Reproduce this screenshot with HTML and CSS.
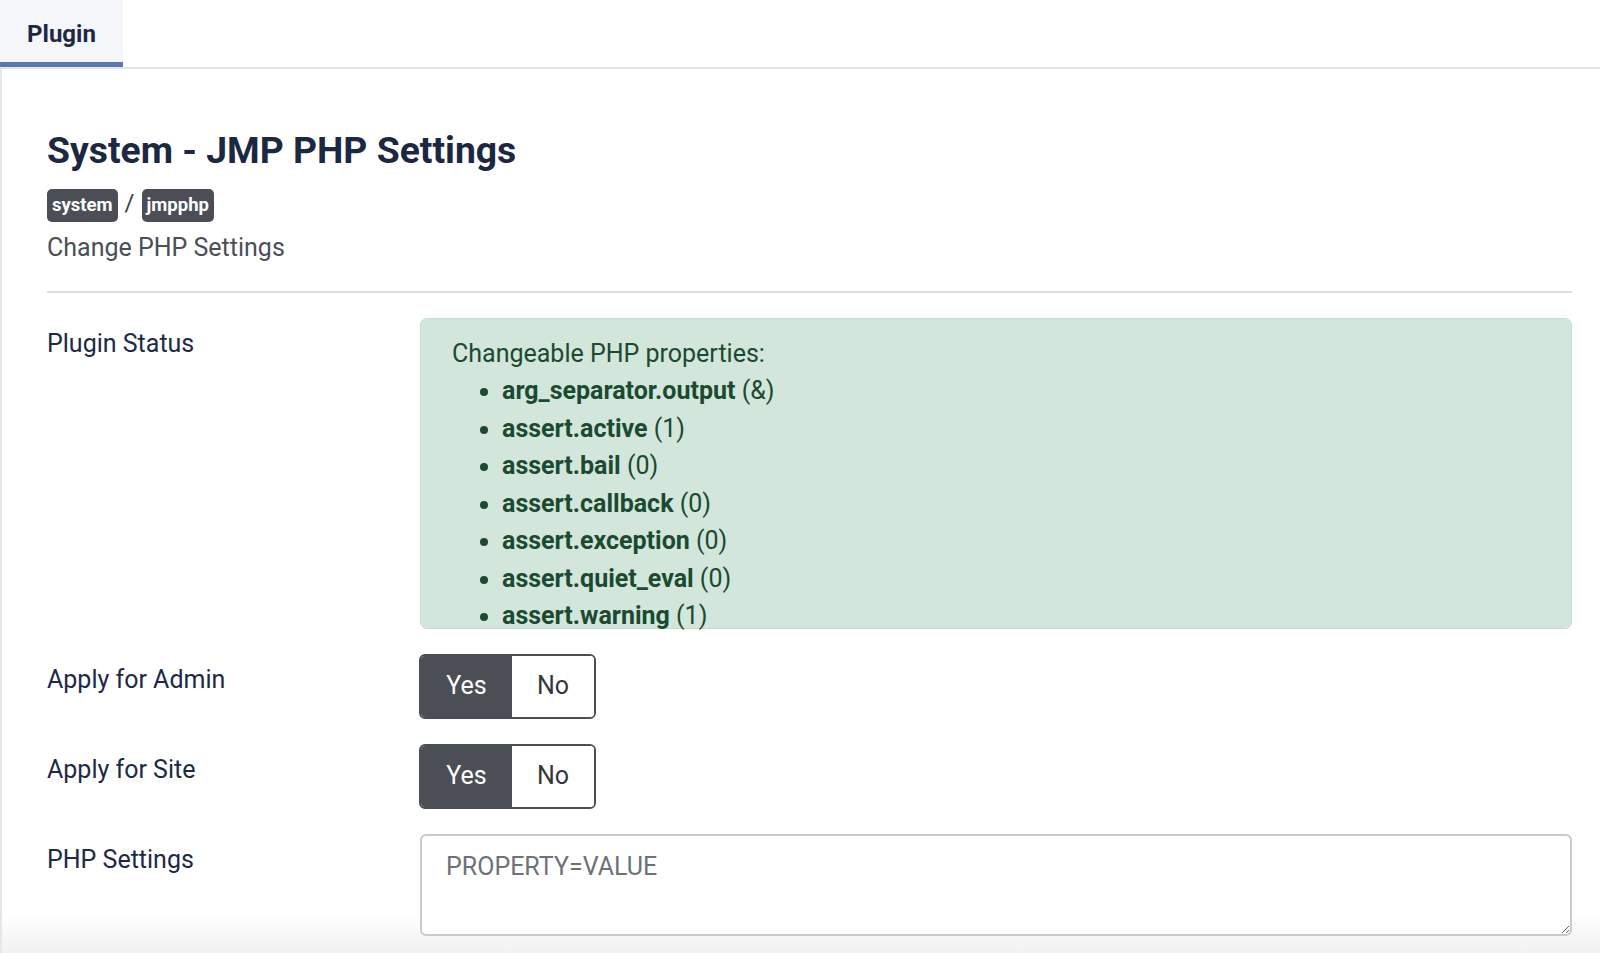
FILE: index.html
```html
<!DOCTYPE html>
<html lang="en">
<head>
<meta charset="utf-8">
<title>System - JMP PHP Settings</title>
<link rel="stylesheet" href="styles.css">
</head>
<body>
<div class="page">
  <nav class="tabs">
    <div class="tab active">Plugin</div>
  </nav>
  <main class="content">
    <h1 class="title">System - JMP PHP Settings</h1>
    <div class="badges">
      <span class="badge">system</span>
      <span class="sep">/</span>
      <span class="badge">jmpphp</span>
    </div>
    <p class="desc">Change PHP Settings</p>
    <hr class="divider">

    <div class="row">
      <div class="label">Plugin Status</div>
      <div class="control">
        <div class="alert">
          <div>Changeable PHP properties:</div>
          <ul class="props">
            <li><strong>arg_separator.output</strong> (&amp;)</li>
            <li><strong>assert.active</strong> (1)</li>
            <li><strong>assert.bail</strong> (0)</li>
            <li><strong>assert.callback</strong> (0)</li>
            <li><strong>assert.exception</strong> (0)</li>
            <li><strong>assert.quiet_eval</strong> (0)</li>
            <li><strong>assert.warning</strong> (1)</li>
          </ul>
        </div>
      </div>
    </div>

    <div class="row">
      <div class="label">Apply for Admin</div>
      <div class="control">
        <div class="switch">
          <span class="opt on">Yes</span>
          <span class="opt">No</span>
        </div>
      </div>
    </div>

    <div class="row">
      <div class="label">Apply for Site</div>
      <div class="control">
        <div class="switch">
          <span class="opt on">Yes</span>
          <span class="opt">No</span>
        </div>
      </div>
    </div>

    <div class="row">
      <div class="label">PHP Settings</div>
      <div class="control">
        <textarea class="textarea" placeholder="PROPERTY=VALUE"></textarea>
      </div>
    </div>
  </main>
</div>
</body>
</html>
```
FILE: styles.css
```css
html {
  background: linear-gradient(to bottom, #ffffff 0, #ffffff 915px, #f1f1f1 953px);
  min-height: 100%;
}
body {
  margin: 0;
  font-family: Roboto, "Liberation Sans", sans-serif;
  font-size: 25px;
  line-height: 1.5;
  color: #1d2a46;
}
.page {
  border-left: 2px solid #e6e7ea;
  min-height: 953px;
  box-sizing: border-box;
}
.tabs {
  display: flex;
  height: 67px;
  border-bottom: 2px solid #e5e5e5;
  margin-left: -2px;
}
.tab {
  width: 123px;
  height: 57px;
  padding-top: 5px;
  box-sizing: content-box;
  display: flex;
  align-items: center;
  justify-content: center;
  background: #f4f6f9;
  border-bottom: 5px solid #5878b3;
  font-weight: 700;
  font-size: 24px;
  color: #1c2944;
}
.content {
  padding: 0 28px 0 45px;
}
.title {
  margin: 58px 0 0;
  font-size: 37.3px;
  line-height: 46px;
  font-weight: 700;
  color: #1c2841;
}
.badges {
  display: flex;
  align-items: center;
  height: 33px;
  margin-top: 16px;
}
.badge {
  display: inline-flex;
  align-items: center;
  height: 33px;
  padding: 0 5px;
  border-radius: 5px;
  background: #4b4f55;
  color: #fff;
  font-size: 18.5px;
  font-weight: 700;
  line-height: 1;
}
.sep {
  margin: 0 7px;
  font-size: 24px;
  color: #3b3f45;
  position: relative;
  top: -3px;
}
.desc {
  margin: 7px 0 0;
  color: #4a4f56;
  line-height: 37.5px;
}
.divider {
  margin: 24px 0 0;
  border: 0;
  border-top: 2px solid #dedede;
  height: 0;
}
.row {
  display: grid;
  grid-template-columns: 373px 1fr;
  margin-top: 25px;
}
.label {
  padding-top: 7px;
  line-height: 37.5px;
  color: #1d2a46;
}
.alert {
  height: 311px;
  box-sizing: border-box;
  padding: 16px 31px 0;
  background: #d3e6dc;
  border: 1px solid #c2dccd;
  border-radius: 7px;
  color: #1a4a30;
  line-height: 37.5px;
}
.props {
  margin: 0;
  padding-left: 50px;
}
.props strong {
  font-weight: 700;
}
.switch {
  display: inline-flex;
  height: 65px;
  box-sizing: border-box;
  border: 2px solid #4b4f55;
  border-radius: 6px;
  overflow: hidden;
  margin-left: -1px;
}
.opt {
  display: flex;
  align-items: center;
  justify-content: center;
  width: 82px;
  background: #fff;
  color: #33373c;
}
.opt.on {
  width: 91px;
  background: #4b4f55;
  color: #fff;
}
.textarea {
  display: block;
  width: 100%;
  height: 102px;
  box-sizing: border-box;
  border: 2px solid #c7cbd0;
  border-radius: 6px;
  padding: 12px 24px;
  font-family: Roboto, "Liberation Sans", sans-serif;
  font-size: 25px;
  line-height: 37.5px;
  color: #333;
  background: #fff;
}
.textarea::placeholder {
  color: #6d7278;
  opacity: 1;
}
```
